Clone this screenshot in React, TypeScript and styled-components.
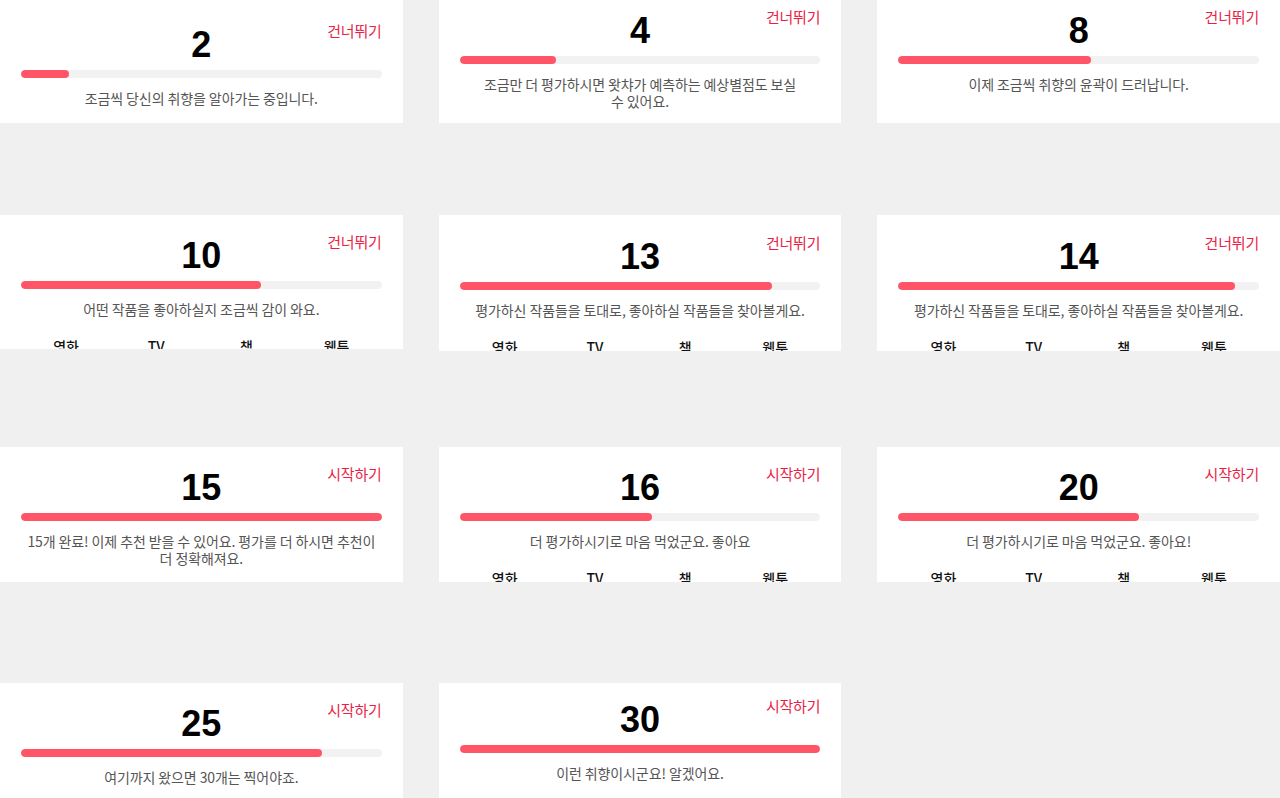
import React from "react";
import styled, { createGlobalStyle } from "styled-components";

const GlobalStyle = createGlobalStyle`
  html, body {
    margin: 0;
    padding: 0;
    background: #f0f0f0;
  }
  * {
    box-sizing: border-box;
  }
`;

const Page = styled.main`
  display: grid;
  grid-template-columns: repeat(3, 1fr);
  grid-template-rows: 215px 232px 236px auto;
  column-gap: 36px;
  align-items: start;
  min-height: 100vh;
  background: #f0f0f0;
  font-family: "Noto Sans CJK KR", "Noto Sans", sans-serif;
`;

const Card = styled.section<{ $h: number; $pad: number }>`
  height: ${(p) => p.$h}px;
  padding: ${(p) => p.$pad}px 21px 0;
  background: #fff;
  overflow: hidden;
`;

const Header = styled.div`
  display: grid;
  grid-template-columns: 1fr auto 1fr;
  align-items: start;
`;

const Count = styled.div`
  grid-column: 2;
  font-family: "Liberation Sans", Arial, sans-serif;
  font-weight: 700;
  font-size: 36px;
  line-height: 36px;
  color: #000;
`;

const Action = styled.a`
  grid-column: 3;
  justify-self: end;
  margin-top: -7px;
  font-size: 15px;
  line-height: 21px;
  letter-spacing: -0.2px;
  color: #ea1f47;
  text-decoration: none;
  cursor: pointer;
`;

const Track = styled.div`
  margin-top: 7px;
  height: 8px;
  border-radius: 4px;
  background: #f2f2f2;
  overflow: hidden;
`;

const Fill = styled.div`
  height: 100%;
  border-radius: 4px;
  background: #ff5566;
`;

const Message = styled.p`
  margin: 12px 0 0;
  font-size: 14px;
  line-height: 17px;
  letter-spacing: -0.1px;
  color: #555;
  text-align: center;
  white-space: pre-line;
`;

const Tabs = styled.nav`
  margin-top: 18px;
  display: grid;
  grid-template-columns: repeat(4, 1fr);
`;

const Tab = styled.span`
  text-align: center;
  font-size: 14px;
  line-height: 20px;
  font-weight: 500;
  color: #111;
`;

type Step = {
  n: number;
  total: number;
  action: string;
  msg: string;
  pad: number;
  h: number;
  tabs?: boolean;
};

const skip = "건너뛰기";
const start = "시작하기";

const steps: (Step | null)[] = [
  { n: 2, total: 15, action: skip, msg: "조금씩 당신의 취향을 알아가는 중입니다.", pad: 27, h: 123 },
  {
    n: 4,
    total: 15,
    action: skip,
    msg: "조금만 더 평가하시면 왓챠가 예측하는 예상별점도 보실\n수 있어요.",
    pad: 13,
    h: 123,
  },
  { n: 8, total: 15, action: skip, msg: "이제 조금씩 취향의 윤곽이 드러납니다.", pad: 13, h: 123 },
  { n: 10, total: 15, action: skip, msg: "어떤 작품을 좋아하실지 조금씩 감이 와요.", pad: 23, h: 134, tabs: true },
  {
    n: 13,
    total: 15,
    action: skip,
    msg: "평가하신 작품들을 토대로, 좋아하실 작품들을 찾아볼게요.",
    pad: 24,
    h: 136,
    tabs: true,
  },
  {
    n: 14,
    total: 15,
    action: skip,
    msg: "평가하신 작품들을 토대로, 좋아하실 작품들을 찾아볼게요.",
    pad: 24,
    h: 136,
    tabs: true,
  },
  {
    n: 15,
    total: 15,
    action: start,
    msg: "15개 완료! 이제 추천 받을 수 있어요. 평가를 더 하시면 추천이\n더 정확해져요.",
    pad: 23,
    h: 135,
    tabs: true,
  },
  { n: 16, total: 30, action: start, msg: "더 평가하시기로 마음 먹었군요. 좋아요", pad: 23, h: 135, tabs: true },
  { n: 20, total: 30, action: start, msg: "더 평가하시기로 마음 먹었군요. 좋아요!", pad: 23, h: 135, tabs: true },
  { n: 25, total: 30, action: start, msg: "여기까지 왔으면 30개는 찍어야죠.", pad: 23, h: 134 },
  { n: 30, total: 30, action: start, msg: "이런 취향이시군요! 알겠어요.", pad: 19, h: 134 },
  null,
];

const categories = ["영화", "TV", "책", "웹툰"];

const ProgressCard = ({ step }: { step: Step }) => (
  <Card $h={step.h} $pad={step.pad}>
    <Header>
      <Count>{step.n}</Count>
      <Action>{step.action}</Action>
    </Header>
    <Track>
      <Fill style={{ width: `${(step.n / step.total) * 100}%` }} />
    </Track>
    <Message>{step.msg}</Message>
    {step.tabs && (
      <Tabs>
        {categories.map((c) => (
          <Tab key={c}>{c}</Tab>
        ))}
      </Tabs>
    )}
  </Card>
);

export default function App() {
  return (
    <>
      <GlobalStyle />
      <Page>
        {steps.map((s, i) => (s ? <ProgressCard key={i} step={s} /> : <div key={i} />))}
      </Page>
    </>
  );
}
